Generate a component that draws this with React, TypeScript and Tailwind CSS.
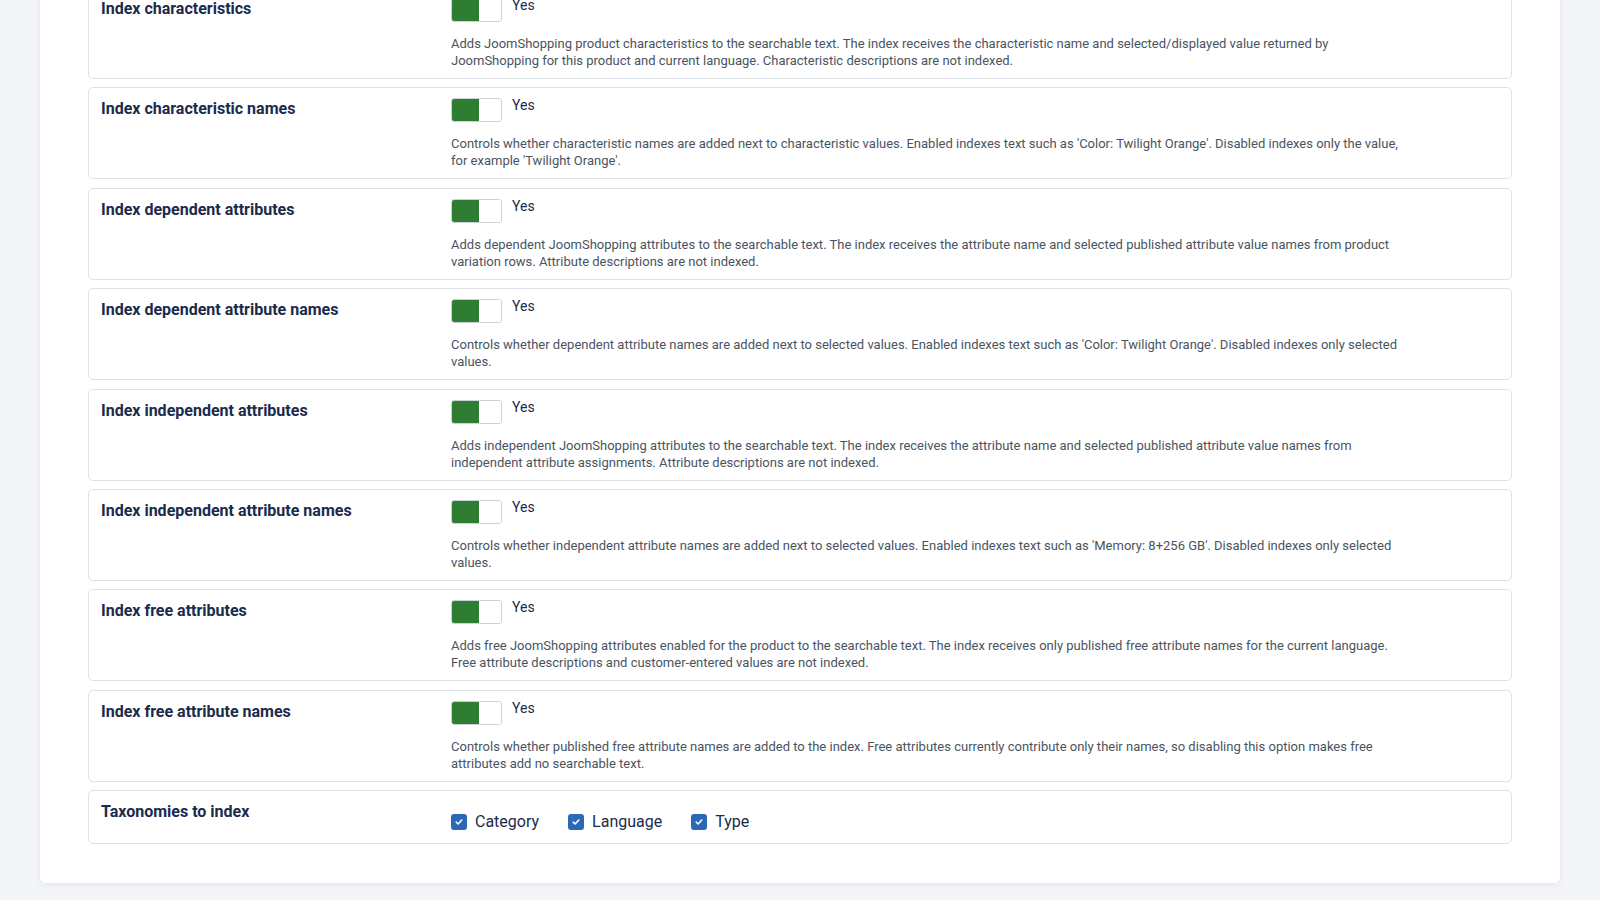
import React from "react";

type Row = { title: string; desc: string };

const rows: Row[] = [
  {
    title: "Index characteristics",
    desc: "Adds JoomShopping product characteristics to the searchable text. The index receives the characteristic name and selected/displayed value returned by JoomShopping for this product and current language. Characteristic descriptions are not indexed.",
  },
  {
    title: "Index characteristic names",
    desc: "Controls whether characteristic names are added next to characteristic values. Enabled indexes text such as 'Color: Twilight Orange'. Disabled indexes only the value, for example 'Twilight Orange'.",
  },
  {
    title: "Index dependent attributes",
    desc: "Adds dependent JoomShopping attributes to the searchable text. The index receives the attribute name and selected published attribute value names from product variation rows. Attribute descriptions are not indexed.",
  },
  {
    title: "Index dependent attribute names",
    desc: "Controls whether dependent attribute names are added next to selected values. Enabled indexes text such as 'Color: Twilight Orange'. Disabled indexes only selected values.",
  },
  {
    title: "Index independent attributes",
    desc: "Adds independent JoomShopping attributes to the searchable text. The index receives the attribute name and selected published attribute value names from independent attribute assignments. Attribute descriptions are not indexed.",
  },
  {
    title: "Index independent attribute names",
    desc: "Controls whether independent attribute names are added next to selected values. Enabled indexes text such as 'Memory: 8+256 GB'. Disabled indexes only selected values.",
  },
  {
    title: "Index free attributes",
    desc: "Adds free JoomShopping attributes enabled for the product to the searchable text. The index receives only published free attribute names for the current language. Free attribute descriptions and customer-entered values are not indexed.",
  },
  {
    title: "Index free attribute names",
    desc: "Controls whether published free attribute names are added to the index. Free attributes currently contribute only their names, so disabling this option makes free attributes add no searchable text.",
  },
];

function Switcher() {
  return (
    <div className="flex items-start">
      <div className="flex h-[24px] w-[51px] overflow-hidden rounded-[3px] border border-[#c9d3d8] bg-white">
        <div className="h-full w-[27px] bg-[#2e7d32]" />
        <div className="h-full flex-1 bg-white" />
      </div>
      <span className="ml-[10px] mt-[-3px] text-[14px] leading-[20px] text-[#1a2b4c]">Yes</span>
    </div>
  );
}

function Check({ label }: { label: string }) {
  return (
    <label className="mr-[29px] flex items-center">
      <span className="flex h-[16px] w-[16px] items-center justify-center rounded-[3px] bg-[#2a69b8]">
        <svg width="10" height="10" viewBox="0 0 10 10" fill="none">
          <path d="M2.2 5.2 4.1 7 7.8 3" stroke="white" strokeWidth="1.6" strokeLinecap="round" strokeLinejoin="round" />
        </svg>
      </span>
      <span className="ml-[8px] text-[16px] leading-[24px] text-[#1a2b4c]">{label}</span>
    </label>
  );
}

function Card({ title, children }: { title: string; children: React.ReactNode }) {
  return (
    <div className="flex rounded-[5px] border border-[#dde2e7] bg-white px-[12px] pb-[9px] pt-[10px]">
      <div className="w-[350px] shrink-0 pt-[1px] text-[16px] font-bold leading-[20px] text-[#1a2b4c]">{title}</div>
      <div className="min-w-0 flex-1">{children}</div>
    </div>
  );
}

export default function App() {
  return (
    <div
      className="h-[900px] overflow-hidden bg-[#f3f5f9]"
      style={{ fontFamily: "Roboto, 'Noto Sans', sans-serif" }}
    >
      <div className="mx-[40px] mt-[-37px] rounded-[6px] bg-white px-[48px] pb-[39px] pt-[24px] shadow-[0_2px_6px_rgba(30,45,80,0.07)]">
        <div className="flex flex-col gap-[8.4px]">
          {rows.map((r) => (
            <Card key={r.title} title={r.title}>
              <Switcher />
              <p className="mt-[13px] max-w-[955px] text-[13px] leading-[17px] text-[#4a5461]">{r.desc}</p>
            </Card>
          ))}
          <Card title="Taxonomies to index">
            <div className="mt-[8.5px] flex items-center">
              <Check label="Category" />
              <Check label="Language" />
              <Check label="Type" />
            </div>
          </Card>
        </div>
      </div>
    </div>
  );
}
